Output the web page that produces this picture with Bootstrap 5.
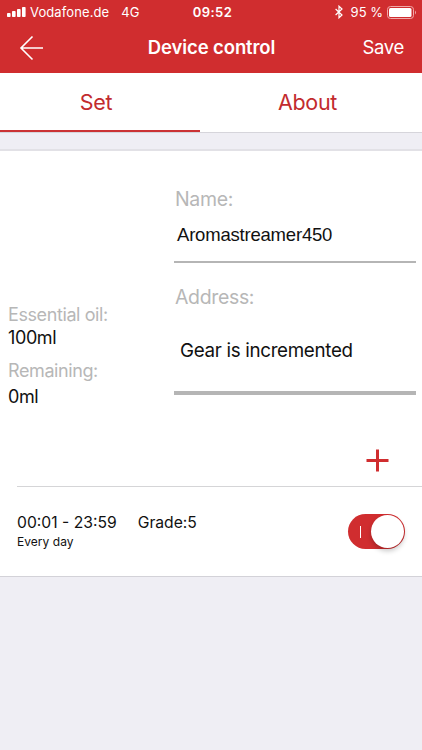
<!DOCTYPE html>
<html lang="en">
<head>
<meta charset="utf-8">
<meta name="viewport" content="width=device-width, initial-scale=1">
<title>Device control</title>
<link href="https://cdn.jsdelivr.net/npm/bootstrap@5.3.0/dist/css/bootstrap.min.css" rel="stylesheet">
<style>
  body { font-family: Inter, "Liberation Sans", sans-serif; background: #efeef4; color: #111; line-height: 1; height: 750px; overflow: hidden; }
  svg { display: block; flex: none; }
  .app-header { background: #d02d2f; color: #fff; height: 73px; }
  .status-bar { height: 24px; font-size: 13px; display: grid; grid-template-columns: 1fr auto 1fr; padding: 0 5px 0 7px; }
  .carrier { letter-spacing: .1px; }
  .carrier-name { margin-left: 4px; }
  .network { margin-left: 12px; }
  .clock { font-weight: 600; letter-spacing: .4px; font-size: 13px; padding-left: 1px; }
  .title-bar { height: 47px; display: grid; grid-template-columns: 1fr auto 1fr; padding: 0 18px 0 19px; }
  .screen-title { font-size: 18.5px; font-weight: 600; letter-spacing: -.1px; }
  .save-link { font-size: 18.5px; color: #fff; letter-spacing: -.3px; }
  .tab-strip { height: 60px; border-bottom: 1px solid #d6d5db; }
  .tab-strip .nav-link { color: #c22b2e; font-size: 21.5px; line-height: 1; padding: 0; border-radius: 0; letter-spacing: -.35px; }
  .tab-set { width: 200px; height: 59px; border-bottom: 2px solid #cb3234; padding: 3px 8px 0 0 !important; }
  .tab-about { padding: 1px 7px 0 0 !important; }
  .panel { margin-top: 16px; border-top: 2px solid #e2e1e6; border-bottom: 1px solid #d3d2d8; height: 428px; }
  .form-area { height: 285px; }
  .levels { width: 174px; padding: 154px 0 0 8px; }
  .field-label { color: #b7b7b7; }
  .levels .field-label, .levels .level-value { font-size: 18px; height: 20px; line-height: 20px; white-space: nowrap; letter-spacing: -.4px; }
  .levels .level-value + .field-label { margin-top: 13px; }
  .first-value { margin-top: 3px; }
  .second-value { margin-top: 6px; }
  .fields { padding: 37px 6px 0 0; font-size: 19.5px; }
  .fields .field-label { line-height: 22px; padding-left: 1px; letter-spacing: -.35px; }
  .name-input { font-family: "Liberation Sans", sans-serif; height: 52px; margin-top: 1px; padding: 13px 0 0 3px; border-bottom: 2px solid #b5b5b5; font-size: 18.5px; line-height: 22px; letter-spacing: -.2px; }
  .address-label { margin-top: 23px; }
  .address-input { height: 87px; padding: 32px 0 0 6px; border-bottom: 4px solid #b5b5b5; font-size: 18.8px; line-height: 22px; letter-spacing: -.32px; }
  .add-row { height: 50px; padding: 0 33px 2px 0; }
  .schedule { margin-left: 17px; border-top: 1px solid #d5d5d7; height: 90px; padding-right: 17px; }
  .slot { font-size: 15.7px; line-height: 20px; gap: 21px; }
  .repeat { font-size: 12px; line-height: 18px; letter-spacing: .05px; }
  .power-switch { width: 57px; height: 35px; border-radius: 18px; background: #d02d2f; padding: 0 1px 0 12px; }
  .switch-mark { width: 1px; height: 12px; background: #fff; }
  .switch-knob { width: 33px; height: 33px; box-shadow: 0 3px 5px rgba(0,0,0,.22); }
</style>
</head>
<body>
<header class="app-header">
  <div class="status-bar align-items-center">
    <div class="d-flex align-items-center carrier">
      <svg width="19" height="10" viewBox="0 0 19 10" fill="#fff"><rect y="6" width="3.6" height="4" rx=".8"/><rect x="5" y="4" width="3.6" height="6" rx=".8"/><rect x="10" y="2" width="3.6" height="8" rx=".8"/><rect x="15" width="3.6" height="10" rx=".8"/></svg>
      <span class="carrier-name">Vodafone.de</span><span class="network">4G</span>
    </div>
    <div class="clock">09:52</div>
    <div class="d-flex align-items-center justify-content-end">
      <svg width="8" height="14" viewBox="0 0 8 14" fill="none" stroke="#fff" stroke-width="1.2"><path d="M.6 4 7 10 4 12.8V1.2L7 4 .6 10"/></svg>
      <span class="ms-2 text-nowrap">95 %</span>
      <svg class="ms-1" width="30" height="13" viewBox="0 0 30 13"><rect x=".5" y=".5" width="26" height="12" rx="3" fill="none" stroke="#f0a8a8"/><rect x="2" y="2" width="22.5" height="9" rx="1.5" fill="#fff"/><path d="M28 4.5q2 2 0 4z" fill="#f0a8a8"/></svg>
    </div>
  </div>
  <div class="title-bar align-items-center">
    <a href="#" aria-label="Back"><svg width="25" height="26" viewBox="0 0 25 26" fill="none" stroke="#fff" stroke-width="1.6"><path d="M13.5 1.5 2 13 13.5 24.5M2 13H24"/></svg></a>
    <h1 class="screen-title m-0">Device control</h1>
    <a href="#" class="save-link text-decoration-none text-end">Save</a>
  </div>
</header>
<nav class="nav tab-strip bg-white flex-nowrap">
  <a href="#" class="nav-link tab-set d-flex align-items-center justify-content-center">Set</a>
  <a href="#" class="nav-link tab-about flex-fill d-flex align-items-center justify-content-center">About</a>
</nav>
<main class="panel bg-white">
  <div class="form-area d-flex">
    <section class="levels flex-shrink-0">
      <div class="field-label">Essential oil:</div>
      <div class="level-value first-value">100ml</div>
      <div class="field-label">Remaining:</div>
      <div class="level-value second-value">0ml</div>
    </section>
    <section class="fields flex-fill">
      <div class="field-label">Name:</div>
      <div class="name-input">Aromastreamer450</div>
      <div class="field-label address-label">Address:</div>
      <div class="address-input">Gear is incremented</div>
    </section>
  </div>
  <div class="add-row d-flex align-items-center justify-content-end">
    <svg width="23" height="23" viewBox="0 0 23 23" stroke="#d02d2f" stroke-width="3"><path d="M11.5.5v22M.5 11.5h22"/></svg>
  </div>
  <div class="schedule d-flex align-items-center justify-content-between">
    <div>
      <div class="slot d-flex"><span>00:01 - 23:59</span><span>Grade:5</span></div>
      <div class="repeat">Every day</div>
    </div>
    <div class="power-switch d-flex align-items-center justify-content-between" role="switch" aria-checked="true">
      <span class="switch-mark"></span><span class="switch-knob bg-white rounded-circle"></span>
    </div>
  </div>
</main>
<script src="https://cdn.jsdelivr.net/npm/bootstrap@5.3.0/dist/js/bootstrap.bundle.min.js"></script>
</body>
</html>
